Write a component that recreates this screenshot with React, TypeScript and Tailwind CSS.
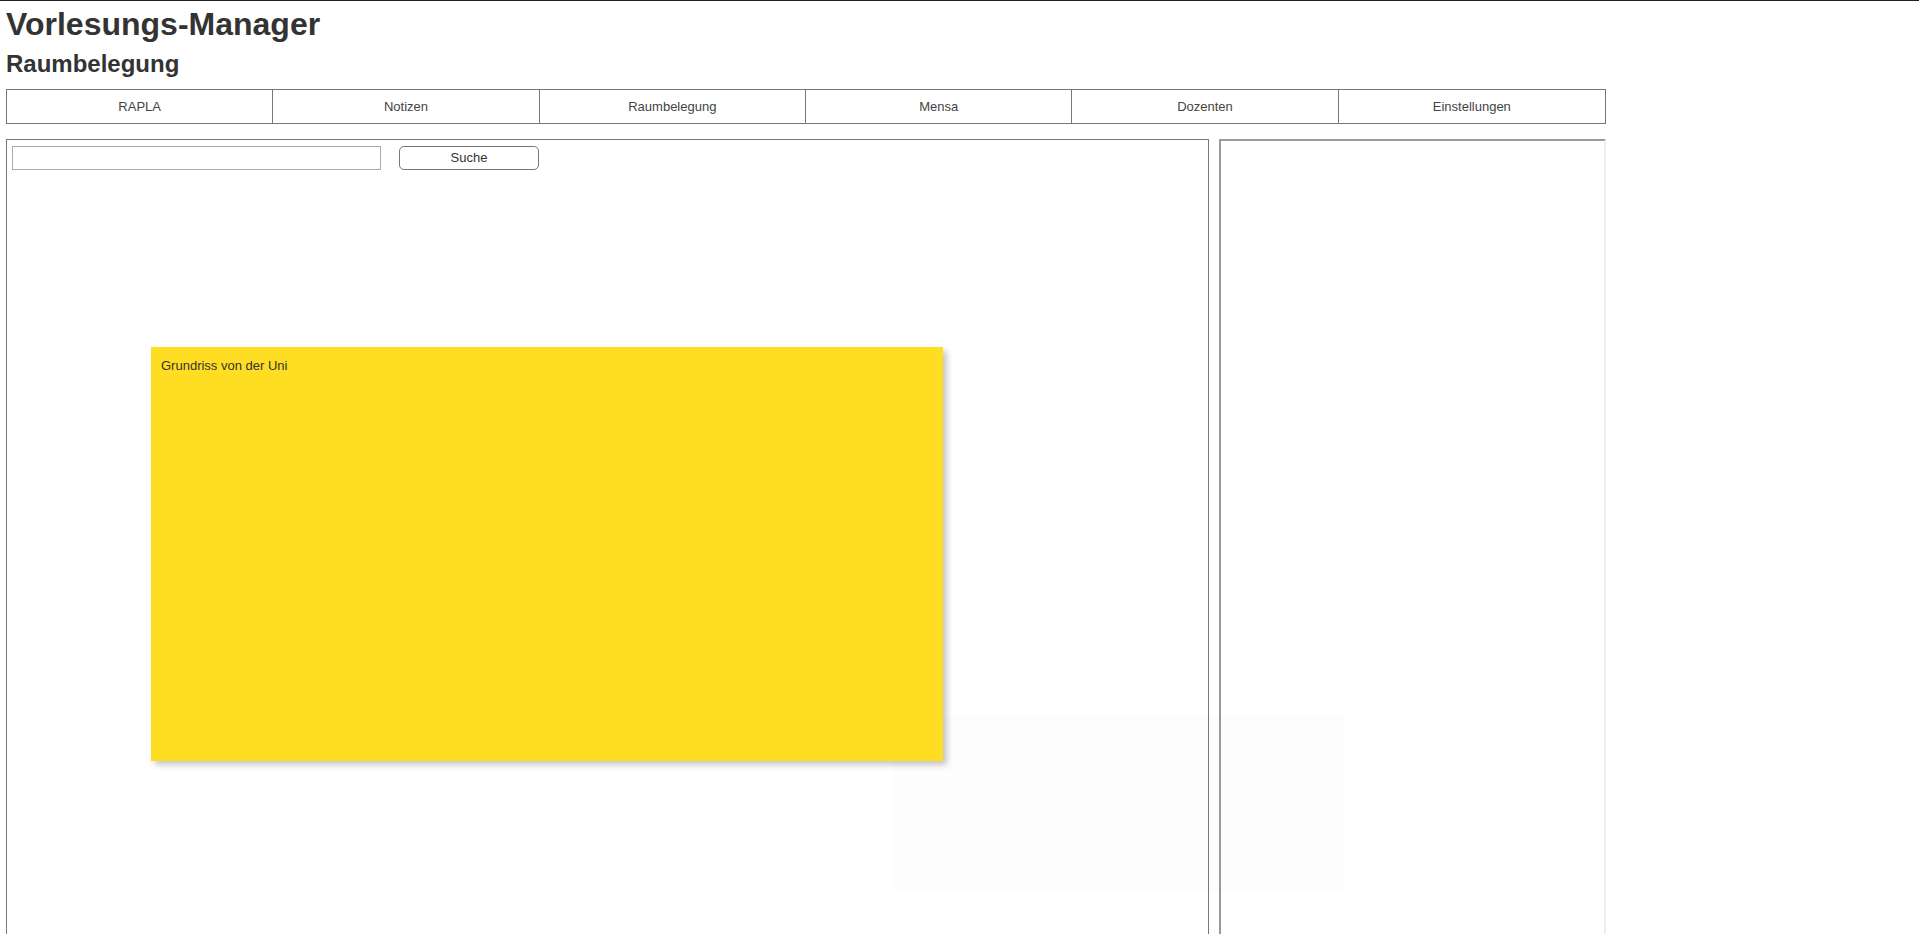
const tabs = ["RAPLA", "Notizen", "Raumbelegung", "Mensa", "Dozenten", "Einstellungen"];

const App = () => {
  return (
    <div
      className="relative isolate min-h-[1089px] border-t border-[#222222] bg-white pl-[6px] text-[#333333]"
      style={{ fontFamily: '"Liberation Sans", Arial, sans-serif' }}
    >
      {/* faint backdrop, sits under the panels */}
      <div className="pointer-events-none absolute left-[893px] top-[714px] -z-10 h-[177px] w-[450px] bg-[#fdfdfd]" />

      {/* Header */}
      <h1 className="mt-[5px] text-[32px] font-bold leading-[37px]">Vorlesungs-Manager</h1>
      <h2 className="mt-[7px] text-[24px] font-bold leading-[28px]">Raumbelegung</h2>

      {/* Navigation */}
      <nav className="mt-[11px] grid h-[35px] w-[1600px] grid-cols-6 divide-x divide-[#777777] border border-[#777777]">
        {tabs.map((tab) => (
          <div key={tab} className="flex items-center justify-center text-[13px] text-[#444444]">
            {tab}
          </div>
        ))}
      </nav>

      {/* Content */}
      <div className="mt-[15px] flex gap-[10px]">
        <div className="h-[940px] w-[1203px] border border-[#777777] px-[5px] pt-[6px]">
          <div className="flex items-center gap-[18px]">
            <input
              type="text"
              className="h-[24px] w-[369px] border border-[#aaaaaa] bg-white outline-none"
            />
            <button className="h-[24px] w-[140px] rounded-[5px] border border-[#767676] bg-white text-[13px] text-[#333333]">
              Suche
            </button>
          </div>
          <div className="ml-[139px] mt-[177px] h-[414px] w-[792px] bg-[#ffdd22] px-[10px] pt-[9px] text-[13px] text-[#333333] shadow-[4px_4px_6px_rgba(0,0,0,0.22)]">
            Grundriss von der Uni
          </div>
        </div>
        <div className="h-[940px] w-[387px] border-2 border-b-[#eeeeee] border-l-[#9a9a9a] border-r-[#eeeeee] border-t-[#9a9a9a]" />
      </div>
    </div>
  );
};

export default App;
